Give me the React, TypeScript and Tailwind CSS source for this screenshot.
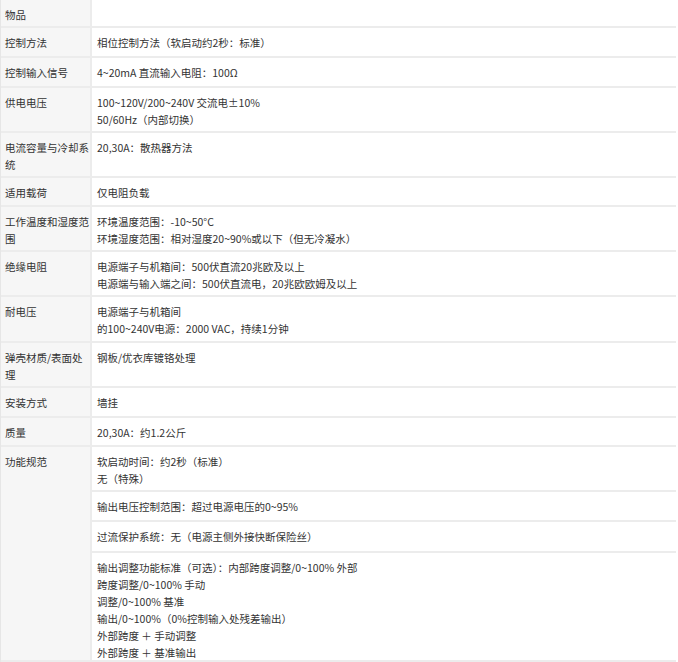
import React from 'react';

type Row = { label: string; h: number; lines: string[] };

const ROWS: Row[] = [
  { label: '物品', h: 28, lines: [] },
  { label: '控制方法', h: 30, lines: ['相位控制方法（软启动约2秒：标准）'] },
  { label: '控制输入信号', h: 30, lines: ['4~20mA 直流输入电阻：100Ω'] },
  { label: '供电电压', h: 45, lines: ['100~120V/200~240V 交流电±10%', '50/60Hz（内部切换）'] },
  { label: '电流容量与冷却系统', h: 45, lines: ['20,30A：散热器方法'] },
  { label: '适用载荷', h: 29, lines: ['仅电阻负载'] },
  { label: '工作温度和湿度范围', h: 45, lines: ['环境温度范围：-10~50°C', '环境湿度范围：相对湿度20~90%或以下（但无冷凝水）'] },
  { label: '绝缘电阻', h: 45, lines: ['电源端子与机箱间：500伏直流20兆欧及以上', '电源端与输入端之间：500伏直流电，20兆欧欧姆及以上'] },
  { label: '耐电压', h: 46, lines: ['电源端子与机箱间', '的100~240V电源：2000 VAC，持续1分钟'] },
  { label: '弹壳材质/表面处理', h: 45, lines: ['钢板/优衣库镀铬处理'] },
  { label: '安装方式', h: 30, lines: ['墙挂'] },
  { label: '质量', h: 29, lines: ['20,30A：约1.2公斤'] },
];

const FUNC: { h: number; lines: string[] }[] = [
  { h: 45, lines: ['软启动时间：约2秒（标准）', '无（特殊）'] },
  { h: 30, lines: ['输出电压控制范围：超过电源电压的0~95%'] },
  { h: 31, lines: ['过流保护系统：无（电源主侧外接快断保险丝）'] },
  { h: 107, lines: ['输出调整功能标准（可选）：内部跨度调整/0~100% 外部', '跨度调整/0~100% 手动', '调整/0~100% 基准', '输出/0~100%（0%控制输入处残差输出）', '外部跨度 ＋ 手动调整', '外部跨度 ＋ 基准输出'] },
];

function Cell({ lines }: { lines: string[] }) {
  return (
    <div className="pl-[5px] pt-[6px]">
      {lines.map((l, i) => (
        <div key={i}>{l}</div>
      ))}
    </div>
  );
}

export default function App() {
  return (
    <div className="w-[678px] h-[662px] bg-white overflow-hidden text-[10.5px] leading-[17px] text-[#333]" style={{ fontFamily: '"Noto Sans CJK SC", "Noto Sans", sans-serif' }}>
      <div className="w-[676px] border-l border-[#e6e6e6]">
        {ROWS.map((r, i) => (
          <div key={i} className="flex border-b-2 border-[#ececec]" style={{ height: r.h }}>
            <div className="w-[91px] shrink-0 bg-[#f6f6f6] border-r-2 border-[#ececec] pl-[4px] pt-[6px] break-all">{r.label}</div>
            <div className="flex-1">{r.lines.length > 0 && <Cell lines={r.lines} />}</div>
          </div>
        ))}
        <div className="flex border-b-2 border-[#ececec]">
          <div className="w-[91px] shrink-0 bg-[#f6f6f6] border-r-2 border-[#ececec] pl-[4px] pt-[6px]">功能规范</div>
          <div className="flex-1">
            {FUNC.map((f, i) => (
              <div key={i} className={i < FUNC.length - 1 ? 'border-b-2 border-[#ececec]' : ''} style={{ height: f.h }}>
                <Cell lines={f.lines} />
              </div>
            ))}
          </div>
        </div>
      </div>
    </div>
  );
}
